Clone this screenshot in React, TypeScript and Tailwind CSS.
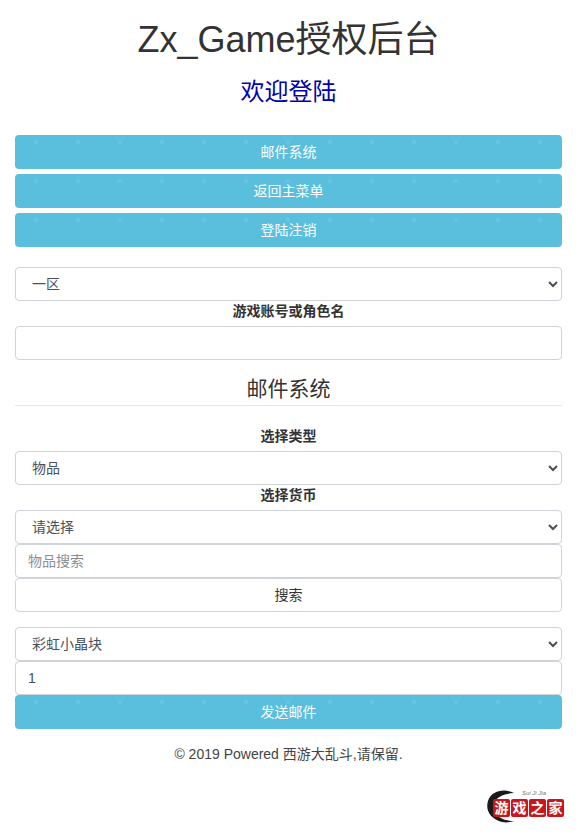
import React from 'react';

const fontStack = "font-['Liberation_Sans','Noto_Sans_CJK_SC',sans-serif]";

const InfoButton: React.FC<{ label: string; className?: string }> = ({ label, className = '' }) => (
  <button
    type="button"
    className={`block h-[34px] w-full rounded-[4px] bg-[#5abedd] bg-[radial-gradient(circle,rgba(255,255,255,0.09)_1.5px,transparent_3px)] bg-[length:42px_34px] bg-[position:0_-10px] text-sm leading-5 text-white ${className}`}
  >
    {label}
  </button>
);

const Select: React.FC<{ value: string; className?: string }> = ({ value, className = '' }) => (
  <select
    defaultValue={value}
    className={`block h-[34px] w-full rounded-[4px] border border-[#ced4da] bg-white px-3 text-sm text-[#495057] ${className}`}
  >
    <option>{value}</option>
  </select>
);

const Label: React.FC<{ text: string; className?: string }> = ({ text, className = '' }) => (
  <label className={`block text-center text-sm font-bold leading-[21px] text-[#333] ${className}`}>{text}</label>
);

const inputClass =
  'block h-[34px] w-full rounded-[4px] border border-[#ced4da] bg-white px-3 text-sm text-[#495057] placeholder:text-[#8a8f94] outline-none';

const App: React.FC = () => {
  return (
    <div className={`relative h-[835px] overflow-hidden bg-white px-[15px] ${fontStack}`}>
      <h1 className="mt-0 pt-5 text-center text-[36px] font-normal leading-10 text-[#333]">Zx_Game授权后台</h1>
      <h2 className="mt-[17px] text-center text-2xl font-normal leading-[29px] text-[#0000b0]">欢迎登陆</h2>

      <div className="mt-[29px] flex flex-col gap-[5px]">
        <InfoButton label="邮件系统" />
        <InfoButton label="返回主菜单" />
        <InfoButton label="登陆注销" />
      </div>

      <Select value="一区" className="mt-5" />
      <Label text="游戏账号或角色名" className="mb-1" />
      <input type="text" className={inputClass} />

      <div className="mt-4 border-b border-[#e5e5e5] pb-[3px] text-center text-[21px] font-normal leading-[26px] text-[#333]">
        邮件系统
      </div>

      <Label text="选择类型" className="mb-1 mt-5" />
      <Select value="物品" />
      <Label text="选择货币" className="mb-1" />
      <Select value="请选择" />
      <input type="text" placeholder="物品搜索" className={inputClass} />
      <button
        type="button"
        className="block h-[34px] w-full rounded-[4px] border border-[#ced4da] bg-white text-sm text-[#333]"
      >
        搜索
      </button>

      <Select value="彩虹小晶块" className="mt-[15px]" />
      <input type="text" defaultValue="1" className={inputClass} />
      <InfoButton label="发送邮件" />

      <p className="mt-[15px] text-center text-sm leading-5 text-[#444]">© 2019 Powered 西游大乱斗,请保留.</p>

      {/* site watermark over the corner */}
      <div className="absolute left-[484px] top-[788px] h-[36px] w-[82px]">
        <svg width="36" height="36" viewBox="0 0 36 36" className="absolute left-0 top-0">
          <path
            d="M30 5C20 0 7 3 4 13c-3 10 3 18 14 21 5 1 9 0 12-1-8 0-18-3-20-11C8 13 14 6 30 5z"
            fill="#1a1a1a"
          />
        </svg>
        <div className="absolute left-[38px] top-0 text-[6px] italic leading-[10px] text-[#777]">Sui Ji Jia</div>
        <div className="absolute left-[9px] top-[11px] flex gap-px">
          {['游', '戏', '之', '家'].map((c) => (
            <span
              key={c}
              className="flex h-[18px] w-[17px] items-center justify-center rounded-[2px] bg-[#c8161d] text-sm font-bold leading-none text-white"
            >
              {c}
            </span>
          ))}
        </div>
      </div>
    </div>
  );
};

export default App;
